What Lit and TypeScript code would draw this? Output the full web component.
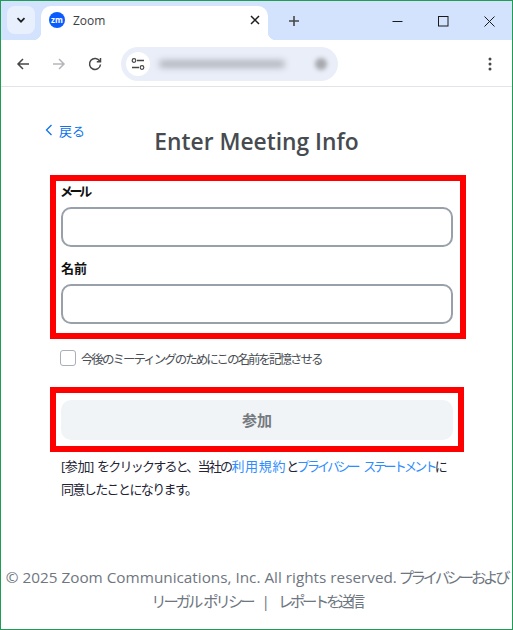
import { LitElement, html, css } from "lit";
import { customElement } from "lit/decorators.js";

@customElement("app-root")
export class AppRoot extends LitElement {
  static styles = css`
    :host {
      display: block;
      width: 513px;
      height: 630px;
      box-sizing: border-box;
      border: 1px solid #1f9d55;
      background: #fff;
      overflow: hidden;
      font-family: "Open Sans", "Noto Sans CJK JP", sans-serif;
    }
    * { box-sizing: border-box; }
    .strip {
      height: 39px;
      background: #d3e3fd;
      display: flex;
      align-items: flex-end;
      padding-left: 6px;
    }
    .tabsearch {
      width: 28px;
      height: 28px;
      margin-bottom: 6px;
      border-radius: 8px;
      background: #e9f0fd;
      display: flex;
      align-items: center;
      justify-content: center;
    }
    .tab {
      position: relative;
      margin-left: 6px;
      width: 227px;
      height: 34px;
      background: #fff;
      border-radius: 10px 10px 0 0;
      display: flex;
      align-items: center;
      padding: 0 7px 6px 8px;
      font-size: 12px;
      color: #3c4043;
    }
    .tab::before,
    .tab::after {
      content: "";
      position: absolute;
      bottom: 0;
      width: 8px;
      height: 8px;
    }
    .tab::before {
      left: -8px;
      background: radial-gradient(circle at 0 0, #d3e3fd 8px, #fff 8.5px);
    }
    .tab::after {
      right: -8px;
      background: radial-gradient(circle at 100% 0, #d3e3fd 8px, #fff 8.5px);
    }
    .favicon {
      width: 16px;
      height: 16px;
      border-radius: 50%;
      background: #0b5cff;
      color: #fff;
      font-size: 8px;
      font-weight: 700;
      line-height: 15px;
      text-align: center;
      margin-right: 8px;
    }
    .tabtitle { flex: 1; }
    .plus { margin-left: 20px; margin-bottom: 13px; display: flex; }
    .winctl { margin-left: auto; display: flex; align-items: center; margin-bottom: 13px; }
    .winbtn { width: 46px; display: flex; justify-content: center; }
    .toolbar {
      height: 47px;
      border-bottom: 1px solid #e1e3e6;
      background: #fff;
      display: flex;
      align-items: center;
      padding: 1px 0 0 15px;
      border-radius: 8px 8px 0 0;
    }
    .nav { display: flex; width: 36px; }
    .nav.reload { width: 26px; }
    .omni {
      margin-left: 7px;
      width: 217px;
      height: 34px;
      border-radius: 17px;
      background: #e9eef8;
      display: flex;
      align-items: center;
      padding-left: 5px;
    }
    .site {
      width: 24px;
      height: 24px;
      border-radius: 50%;
      background: #fff;
      display: flex;
      align-items: center;
      justify-content: center;
    }
    .url {
      margin-left: 9px;
      width: 126px;
      height: 8px;
      border-radius: 4px;
      background: #b4b8c0;
      filter: blur(3px);
    }
    .urldot {
      margin-left: 30px;
      width: 12px;
      height: 12px;
      border-radius: 50%;
      background: #a6a8ad;
      filter: blur(2px);
    }
    .menu { margin-left: auto; margin-right: 20px; display: flex; }
    .page {
      height: 542px;
      display: flex;
      flex-direction: column;
    }
    .back {
      display: flex;
      align-items: center;
      gap: 5px;
      margin: 34px 0 0 44px;
      height: 18px;
      font-size: 13px;
      color: #0e72ed;
    }
    .back span { margin-left: 1px; }
    h1 {
      margin: -14px 0 0;
      font-size: 22.8px;
      line-height: 33px;
      font-weight: 600;
      color: #474b50;
      text-align: center;
    }
    .box {
      border: 6px solid #ff0000;
      margin-left: 49px;
    }
    .fields {
      margin-top: 17px;
      width: 416px;
      height: 164px;
      padding: 0 7px 0 5px;
    }
    label {
      display: block;
      font-size: 13px;
      font-weight: 700;
      color: #111;
      line-height: 18px;
      margin-top: 1px;
    }
    label.kana { letter-spacing: -3.4px; margin-left: -1px; }
    label.second { margin-top: 12px; }
    .input {
      display: block;
      width: 392px;
      height: 40px;
      margin-top: 7px;
      border: 2px solid #98a0a9;
      border-radius: 10px;
      background: #fff;
    }
    .remember {
      display: flex;
      align-items: center;
      margin: 9px 0 0 59px;
      height: 20px;
      font-size: 12.5px;
      letter-spacing: -2px;
      color: #4a4f55;
      white-space: nowrap;
    }
    .check {
      width: 16px;
      height: 16px;
      border: 1px solid #a9afb6;
      border-radius: 3px;
      margin-right: 5px;
      background: #fff;
      flex: none;
    }
    .joinbox {
      margin-top: 19px;
      width: 414px;
      height: 65px;
      padding: 7px 5px;
    }
    .join {
      width: 392px;
      height: 40px;
      border: 0;
      border-radius: 10px;
      background: #f1f4f6;
      font: 700 15px/40px "Open Sans", "Noto Sans CJK JP", sans-serif;
      color: #747a80;
      padding: 0;
      display: block;
    }
    .terms {
      margin: 3px 0 0 60px;
      font-size: 13px;
      line-height: 23px;
      color: #232333;
      white-space: nowrap;
    }
    .t0 { letter-spacing: -0.4px; }
    .t1 { letter-spacing: -1.75px; }
    .t2 { letter-spacing: -1.6px; }
    .t3 { letter-spacing: -2.5px; }
    .terms a { color: #2d8cff; text-decoration: none; }
    .terms a.kanji { letter-spacing: 0.7px; }
    .terms a.kata { letter-spacing: -2.8px; word-spacing: 5px; }
    footer {
      margin-top: auto;
      padding-bottom: 16px;
      text-align: center;
      font-size: 15.3px;
      line-height: 24px;
      color: #6e7680;
      white-space: nowrap;
    }
    .f1 { letter-spacing: -3.2px; margin-left: 1px; }
    .f2 { letter-spacing: -3px; word-spacing: 2px; }
    .f3 { letter-spacing: -3.3px; }
    .sep { margin: 0 8px 0 9px; }
  `;

  render() {
    return html`
      <div class="strip">
        <div class="tabsearch">
          <svg width="12" height="12" viewBox="0 0 12 12"><path d="M2.5 4.2 6 7.7l3.5-3.5" fill="none" stroke="#1f1f1f" stroke-width="1.7"/></svg>
        </div>
        <div class="tab">
          <div class="favicon">zm</div>
          <div class="tabtitle">Zoom</div>
          <svg width="12" height="12" viewBox="0 0 12 12"><path d="M2 2l8 8M10 2l-8 8" stroke="#1f1f1f" stroke-width="1.5"/></svg>
        </div>
        <div class="plus">
          <svg width="12" height="12" viewBox="0 0 12 12"><path d="M6 1v10M1 6h10" stroke="#474747" stroke-width="1.6"/></svg>
        </div>
        <div class="winctl">
          <div class="winbtn"><svg width="11" height="11" viewBox="0 0 11 11"><path d="M.5 5.5h10" stroke="#1a1a1a"/></svg></div>
          <div class="winbtn"><svg width="11" height="11" viewBox="0 0 11 11"><rect x=".5" y=".5" width="9.5" height="9.5" fill="none" stroke="#1a1a1a"/></svg></div>
          <div class="winbtn"><svg width="11" height="11" viewBox="0 0 11 11"><path d="M.5.5l10 10M10.5.5l-10 10" stroke="#1a1a1a"/></svg></div>
        </div>
      </div>
      <div class="toolbar">
        <div class="nav"><svg width="14" height="14" viewBox="0 0 14 14"><path d="M13 7H2M7 2 2 7l5 5" fill="none" stroke="#474747" stroke-width="1.5"/></svg></div>
        <div class="nav"><svg width="14" height="14" viewBox="0 0 14 14"><path d="M1 7h11M7 2l5 5-5 5" fill="none" stroke="#b4b6b9" stroke-width="1.5"/></svg></div>
        <div class="nav reload"><svg width="14" height="14" viewBox="0 0 14 14"><path d="M11.8 4.2A5.5 5.5 0 1 0 12.5 7.5M12.5 1v3.7H8.8" fill="none" stroke="#474747" stroke-width="1.5"/></svg></div>
        <div class="omni">
          <div class="site">
            <svg width="14" height="14" viewBox="0 0 14 14"><path d="M6 3.5h7M1 10.5h7" stroke="#474747" stroke-width="1.3"/><circle cx="3" cy="3.5" r="1.8" fill="none" stroke="#474747" stroke-width="1.2"/><circle cx="11" cy="10.5" r="1.8" fill="none" stroke="#474747" stroke-width="1.2"/></svg>
          </div>
          <div class="url"></div>
          <div class="urldot"></div>
        </div>
        <div class="menu">
          <svg width="4" height="14" viewBox="0 0 4 14"><circle cx="2" cy="2" r="1.5" fill="#474747"/><circle cx="2" cy="7" r="1.5" fill="#474747"/><circle cx="2" cy="12" r="1.5" fill="#474747"/></svg>
        </div>
      </div>
      <div class="page">
        <div class="back">
          <svg width="8" height="12" viewBox="0 0 8 12"><path d="M6.5 1 1.5 6l5 5" fill="none" stroke="#0e72ed" stroke-width="1.3"/></svg>
          <span>戻る</span>
        </div>
        <h1>Enter Meeting Info</h1>
        <div class="box fields">
          <label class="kana">メール</label>
          <div class="input"></div>
          <label class="second">名前</label>
          <div class="input"></div>
        </div>
        <div class="remember"><span class="check"></span>今後のミーティングのためにこの名前を記憶させる</div>
        <div class="box joinbox"><button class="join">参加</button></div>
        <div class="terms"><span class="t0">[参加] </span><span class="t1">をクリックすると、当社の</span><a class="kanji">利用規約</a><span class="t3">と</span><a class="kata">プライバシー ステートメント</a><span>に</span><br><span class="t2">同意したことになります。</span></div>
        <footer>© 2025 Zoom Communications, Inc. All rights reserved.<span class="f1"> プライバシーおよび</span><br><span class="f2">リーガル ポリシー</span><span class="sep">|</span><span class="f3">レポートを送信</span></footer>
      </div>
    `;
  }
}
